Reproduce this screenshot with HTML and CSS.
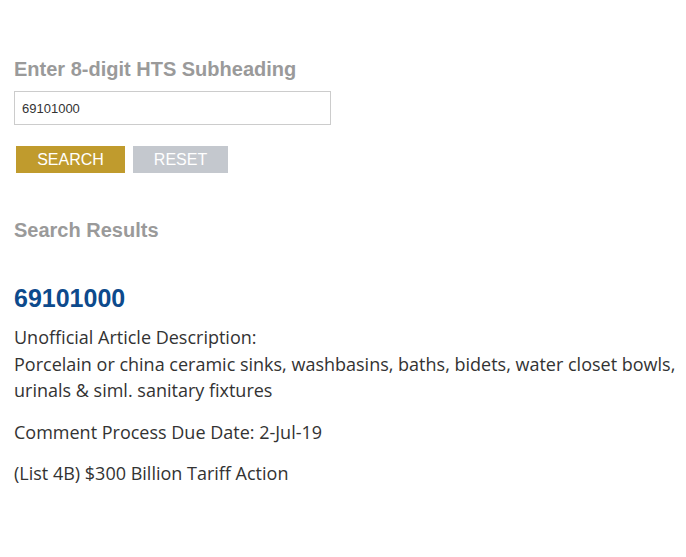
FILE: index.html
```html
<!DOCTYPE html>
<html>
<head>
<meta charset="utf-8">
<link rel="stylesheet" href="styles.css">
</head>
<body>
<div class="page">
  <h2 class="label">Enter 8-digit HTS Subheading</h2>
  <input class="field" type="text" value="69101000">
  <div class="buttons">
    <button class="btn search">SEARCH</button>
    <button class="btn reset">RESET</button>
  </div>
  <h2 class="results">Search Results</h2>
  <h3 class="code">69101000</h3>
  <p class="desc">Unofficial Article Description:<br>Porcelain or china ceramic sinks, washbasins, baths, bidets, water closet bowls, urinals &amp; siml. sanitary fixtures</p>
  <p class="desc">Comment Process Due Date: 2-Jul-19</p>
  <p class="desc">(List 4B) $300 Billion Tariff Action</p>
</div>
</body>
</html>
```
FILE: styles.css
```css
html, body { margin: 0; padding: 0; background: #fff; }
.page { padding: 58px 6px 0 14px; font-family: "Liberation Sans", Arial, sans-serif; }
.label { margin: 0; font-size: 20px; font-weight: bold; color: #9a9a9a; line-height: 23px; }
.field { display: block; box-sizing: border-box; margin-top: 10px; width: 317px; height: 34px; border: 1px solid #cccccc; padding: 0 7px; font-family: "Liberation Sans", Arial, sans-serif; font-size: 13px; color: #333; outline: none; }
.buttons { display: flex; gap: 8px; margin-top: 21px; padding-left: 2px; }
.btn { border: none; height: 27px; font-family: "Liberation Sans", Arial, sans-serif; font-size: 16px; color: #fff; padding: 0; }
.search { width: 109px; background: #c09b2d; }
.reset { width: 95px; background: #c4c8ce; }
.results { margin: 46px 0 0 0; font-size: 20px; font-weight: bold; color: #9a9a9a; line-height: 23px; }
.code { margin: 42px 0 0 0; font-size: 25px; font-weight: bold; color: #0d4a8c; line-height: 29px; }
.desc { margin: 11px 0 0 0; font-family: "Open Sans", sans-serif; font-size: 18px; line-height: 26.5px; color: #333; letter-spacing: 0; }
.desc + .desc { margin-top: 15px; }
```
